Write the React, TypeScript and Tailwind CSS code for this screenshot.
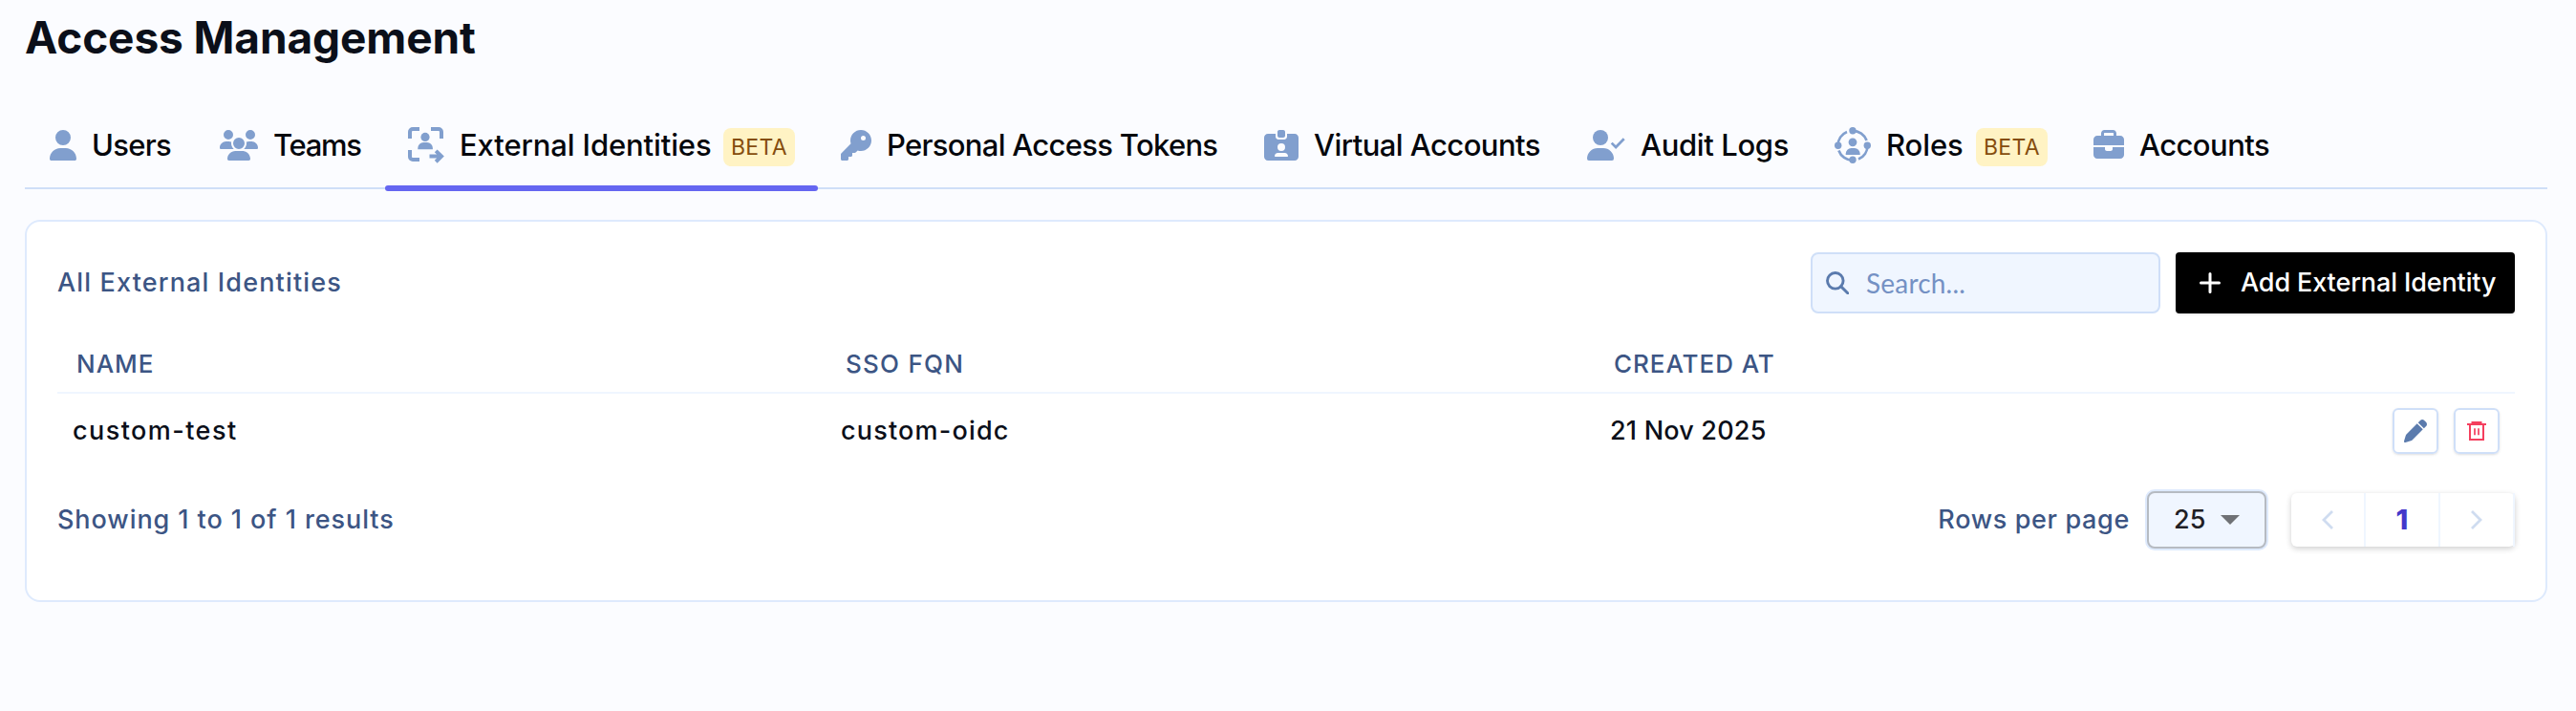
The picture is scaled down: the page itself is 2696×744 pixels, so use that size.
import type { ReactNode } from "react"
import { FaBriefcase, FaIdCardClip, FaKey, FaPen, FaUser, FaUsers } from "react-icons/fa6"

interface ITab {
  name: string
  icon: ReactNode
  labelClass: string
  beta?: boolean
  active?: boolean
}

const ScanUserIcon = () => (
  <svg viewBox="0 0 38 38" className="h-[38px] w-[38px] shrink-0" fill="none" stroke="currentColor" strokeWidth="4">
    <path d="M2 12V5a3 3 0 0 1 3-3h7M24 2h8a3 3 0 0 1 3 3v7M2 24v7a3 3 0 0 0 3 3h7" />
    <path d="M22.5 30.6H35M29.2 24.9l5.8 5.7-5.8 5.7" />
    <circle cx="18" cy="10.4" r="4.6" fill="currentColor" stroke="none" />
    <path
      d="M10.3 23.3v-1.2a6 6 0 0 1 6-6h3.6a6 6 0 0 1 6 6v1.2z"
      fill="currentColor"
      stroke="none"
    />
  </svg>
)

const UserCheckIcon = () => (
  <svg viewBox="0 0 40 32" className="h-8 w-10 shrink-0" fill="currentColor">
    <circle cx="14" cy="8" r="8" />
    <path d="M11.1 19h5.8A11.1 11.1 0 0 1 28 30.1 1.9 1.9 0 0 1 26.1 32H1.9A1.9 1.9 0 0 1 0 30.1 11.1 11.1 0 0 1 11.1 19z" />
    <path d="M25.7 13.6l4.4 4.4 8.6-8.8" fill="none" stroke="currentColor" strokeWidth="2.7" />
  </svg>
)

const RolesIcon = () => (
  <svg viewBox="0 0 38 38" className="h-[38px] w-[38px] shrink-0" fill="currentColor">
    <g fill="none" stroke="currentColor" strokeWidth="2.7">
      <path d="M19 3.8A15.5 15.5 0 0 1 33.6 14" />
      <path d="M34.5 19.3A15.5 15.5 0 0 1 25 33.6" />
      <path d="M19 34.8A15.5 15.5 0 0 1 4.4 24.5" />
      <path d="M3.5 19.3A15.5 15.5 0 0 1 13 5" />
    </g>
    <circle cx="19" cy="3.8" r="3.7" />
    <circle cx="34.3" cy="19.3" r="3.7" />
    <circle cx="19" cy="34.3" r="3.7" />
    <circle cx="3.7" cy="19.3" r="3.7" />
    <circle cx="19" cy="15.8" r="4.4" />
    <path d="M11.7 29v-1.2a5.8 5.8 0 0 1 5.8-5.8h3.4a5.8 5.8 0 0 1 5.8 5.8V29z" />
  </svg>
)

const TrashIcon = () => (
  <svg viewBox="0 0 20 20" className="h-5 w-5" fill="none" stroke="currentColor" strokeWidth="2">
    <path d="M0 3h20" />
    <path d="M5.5 3V1h9v2M5.5 1.6h9" />
    <path d="M3 3v16h14V3" />
    <path d="M8 7.2v7M12 7.2v7" strokeWidth="1.7" />
  </svg>
)

const SearchIcon = () => (
  <svg viewBox="0 0 24 24" className="h-6 w-6" fill="none" stroke="currentColor" strokeWidth="2.9">
    <circle cx="9.8" cy="9.8" r="8.3" />
    <path d="M15.6 15.6l7.2 7.2" strokeLinecap="round" />
  </svg>
)

const tabs: ITab[] = [
  { name: "Users", icon: <FaUser className="h-8 w-7" />, labelClass: "w-[86px] tracking-[-0.7px]" },
  { name: "Teams", icon: <FaUsers className="h-8 w-10" />, labelClass: "w-[93px] tracking-[-1.3px]" },
  {
    name: "External Identities",
    icon: <ScanUserIcon />,
    labelClass: "w-[264px] tracking-[-0.12px]",
    beta: true,
    active: true,
  },
  { name: "Personal Access Tokens", icon: <FaKey className="h-8 w-8" />, labelClass: "w-[347px] tracking-[-0.7px]" },
  { name: "Virtual Accounts", icon: <FaIdCardClip className="h-8 w-9" />, labelClass: "w-[238px] tracking-[-0.55px]" },
  { name: "Audit Logs", icon: <UserCheckIcon />, labelClass: "w-[155px] tracking-[-0.35px]" },
  { name: "Roles", icon: <RolesIcon />, labelClass: "w-[82px] tracking-[-0.1px]", beta: true },
  { name: "Accounts", icon: <FaBriefcase className="h-8 w-8" />, labelClass: "w-[137px] tracking-[-0.55px]" },
]

const TabItem = ({ tab }: { tab: ITab }) => (
  <li className="relative flex h-full items-center px-6">
    <span className="text-[#819fce]">{tab.icon}</span>
    <span className={`ml-4 text-[31px] font-medium whitespace-nowrap text-[#05070c] ${tab.labelClass}`}>
      {tab.name}
    </span>
    {tab.beta && (
      <span className="mt-1 ml-3 flex h-10 w-[75px] items-center justify-center rounded-lg bg-[#fff3c4] text-[23px] tracking-[0.4px] text-[#854d0e]">
        BETA
      </span>
    )}
    {tab.active && <span className="absolute inset-x-0 -bottom-1 h-1.5 rounded-full bg-[#6566f1]" />}
  </li>
)

const App = () => {
  return (
    <div className="min-h-[744px] bg-[#fbfcff] pr-[30px] pl-[26px] font-['Inter',sans-serif] text-[27px] text-[#0b0f19]">
      <div className="pt-[11px]">
        <h1 className="h-14 text-[46px] leading-[56px] font-bold tracking-[-0.1px]">Access Management</h1>
      </div>

      <ul className="mt-[41px] flex h-[90px] items-center border-b-2 border-[#cfdff8] pl-0.5">
        {tabs.map((tab) => (
          <TabItem key={tab.name} tab={tab} />
        ))}
      </ul>

      <section className="mt-8 h-[400px] rounded-2xl border-2 border-[#deeafd] bg-white px-8 pt-8">
        <div className="flex h-16 items-center">
          <h2 className="font-medium tracking-[1.15px] text-[#3c5584]">All External Identities</h2>
          <div className="ml-auto flex h-16 w-[366px] items-center gap-[18px] rounded-lg border-2 border-[#cfdff8] bg-[#f0f6ff] pl-3.5 text-[#5b7bad]">
            <SearchIcon />
            <span className="font-['Lato',sans-serif] text-[28px] tracking-[0.2px] text-[#7491c4]">Search...</span>
          </div>
          <button className="ml-4 flex h-16 w-[355px] items-center rounded-[4px] bg-black pl-[25px] text-[27px] font-medium tracking-[-0.12px] whitespace-nowrap text-white shadow-sm">
            <svg viewBox="0 0 22 22" className="mr-[21px] h-[22px] w-[22px]" stroke="currentColor" strokeWidth="3">
              <path d="M11 1.5v19M1.5 11h19" strokeLinecap="round" />
            </svg>
            Add External Identity
          </button>
        </div>

        <table className="mt-[23px] w-full table-fixed border-collapse text-left">
          <thead>
            <tr className="h-[60px] border-b-2 border-[#eff6ff] text-[26px] text-[#3c5584]">
              <th className="w-[804px] p-0 pl-5 font-medium tracking-[1px]">NAME</th>
              <th className="w-[804px] p-0 pl-[21px] font-medium tracking-[1.25px]">SSO FQN</th>
              <th className="p-0 pl-[21px] font-medium tracking-[0.95px]">CREATED AT</th>
              <th className="w-[160px] p-0" />
            </tr>
          </thead>
          <tbody>
            <tr className="h-[78px] font-medium">
              <td className="p-0 pt-0.5 pl-4 tracking-[1.45px]">custom-test</td>
              <td className="p-0 pt-0.5 pl-4 tracking-[1.2px]">custom-oidc</td>
              <td className="p-0 pt-0.5 pl-[17px] tracking-[0.2px]">21 Nov 2025</td>
              <td className="p-0 pr-4">
                <div className="flex justify-end gap-4">
                  <button className="flex h-12 w-12 items-center justify-center rounded-md border-2 border-[#cfdff8] text-[#5b7bad] shadow-sm">
                    <FaPen className="h-6 w-6" />
                  </button>
                  <button className="flex h-12 w-12 items-center justify-center rounded-md border-2 border-[#cfdff8] text-[#f43f5e] shadow-sm">
                    <TrashIcon />
                  </button>
                </div>
              </td>
            </tr>
          </tbody>
        </table>

        <div className="mt-[23px] flex h-16 items-center font-medium text-[#3c5584]">
          <span className="tracking-[0.93px]">Showing 1 to 1 of 1 results</span>
          <span className="ml-auto tracking-[0.65px]">Rows per page</span>
          <div className="ml-4 rounded-[10px] bg-[#deeafd] p-0.5">
            <div className="flex h-15 w-[125px] items-center rounded-lg border-2 border-[#b6bbc2] bg-[#f0f6ff] pl-[26px] text-[#1f2024]">
              <span className="w-[34px]">25</span>
              <svg viewBox="0 0 20 10" className="ml-[15px] h-2.5 w-5 fill-[#6f7175]">
                <path d="M0 0h20L10 10z" />
              </svg>
            </div>
          </div>
          <div className="ml-6 flex h-14 w-[234px] rounded-md bg-white shadow-[0_2px_6px_rgba(0,0,0,0.2)]">
            <div className="flex flex-1 items-center justify-center border-r-2 border-[#eff6ff] text-[#cfdcf0]">
              <svg viewBox="0 0 12 20" className="h-5 w-3" fill="none" stroke="currentColor" strokeWidth="2.8">
                <path d="M11 1L2 10l9 9" />
              </svg>
            </div>
            <div className="flex flex-1 items-center justify-center border-r-2 border-[#eff6ff] text-[29px] font-extrabold text-[#4338ca]">
              1
            </div>
            <div className="flex flex-1 items-center justify-center border-r-2 border-[#eff6ff] text-[#cfdcf0]">
              <svg viewBox="0 0 12 20" className="h-5 w-3" fill="none" stroke="currentColor" strokeWidth="2.8">
                <path d="M1 1l9 9-9 9" />
              </svg>
            </div>
          </div>
        </div>
      </section>
    </div>
  )
}

export default App
